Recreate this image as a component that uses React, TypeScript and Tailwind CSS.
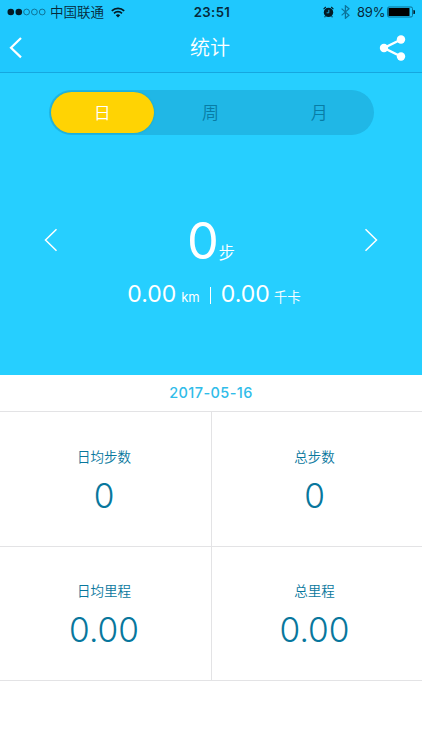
import React from "react";

function StatusBar() {
  return (
    <div className="flex h-6 items-center text-[13px] leading-6 text-[#06293a]">
      <div className="flex w-[140px] items-center pl-[7px]">
        <svg width="39" height="8" viewBox="0 0 39 8" className="shrink-0">
          <circle cx="3.8" cy="4" r="3.3" fill="#031a25" />
          <circle cx="11.8" cy="4" r="3.3" fill="#031a25" />
          {[19.6, 27.4, 35.2].map((cx) => (
            <circle key={cx} cx={cx} cy="4" r="2.9" fill="none" stroke="#0b5f80" strokeWidth="0.8" />
          ))}
        </svg>
        <span className="ml-1 w-[55px] shrink-0 whitespace-nowrap text-[13.5px] font-[350]">中国联通</span>
        <svg width="14" height="11" viewBox="0 0 14 11" className="ml-[6px] shrink-0" fill="none" stroke="#031a25" strokeWidth="1.7">
          <path d="M0.8 3.8a9 9 0 0 1 12.4 0" />
          <path d="M3 6.3a5.8 5.8 0 0 1 8 0" />
          <path d="M7 10.6 4.8 8.3a3.2 3.2 0 0 1 4.4 0z" fill="#031a25" stroke="none" />
        </svg>
      </div>
      <div className="w-[144px] text-center text-[13.2px] font-semibold tracking-[0.4px]">23:51</div>
      <div className="flex flex-1 items-center pl-[39px]">
        <svg width="11" height="12" viewBox="0 0 11 12" className="shrink-0">
          <circle cx="5.5" cy="6.4" r="4.7" fill="#031a25" />
          <path d="M0.6 3.2 2.8 1M10.4 3.2 8.2 1M2.4 10.2 1.6 11.3M8.6 10.2l.8 1.1" stroke="#031a25" strokeWidth="1.1" />
          <path d="M5.8 3.8v3H3.6" fill="none" stroke="#1fc8fe" strokeWidth="0.8" />
        </svg>
        <svg width="9" height="14" viewBox="0 0 9 14" className="ml-[7px] shrink-0" fill="none" stroke="#0b7299" strokeWidth="1.2">
          <path d="M0.6 3.6 8 10.2 4.4 13.3V0.7L8 3.8 0.6 10.4" />
        </svg>
        <span className="ml-[7px] w-[28px] shrink-0 text-[13px] tracking-[-0.2px]">89%</span>
        <svg width="28" height="12" viewBox="0 0 28 12" className="ml-[2px] shrink-0">
          <rect x="0.5" y="1" width="25" height="10" rx="1.5" fill="none" stroke="#087095" />
          <rect x="1.5" y="2" width="21" height="8" rx="0.5" fill="#000" />
          <path d="M26.4 4a2 2 0 0 1 0 4z" fill="#031a25" />
        </svg>
      </div>
    </div>
  );
}

function Header() {
  return (
    <header className="h-[73px] border-b border-[#16a7df] bg-[#1fc8fe]">
      <StatusBar />
      <div className="flex h-12 items-center justify-between pl-[8px] pr-[16px]">
        <svg width="33" height="22" viewBox="0 0 33 22" fill="none" stroke="#fff" strokeWidth="2.2">
          <path d="M13 1 3 10.7 13 20.4" />
        </svg>
        <h1 className="text-[20px] leading-6 font-[350] text-white">统计</h1>
        <svg width="27" height="26" viewBox="0 0 27 26" fill="#fff">
          <path d="M22 4.5 5 13l17 8.5" fill="none" stroke="#fff" strokeWidth="2.5" />
          <circle cx="5" cy="13" r="4.2" />
          <circle cx="22" cy="4.5" r="4.2" />
          <circle cx="22" cy="21.5" r="4.2" />
        </svg>
      </div>
    </header>
  );
}

function Tabs() {
  return (
    <div className="mx-auto flex h-[45px] w-[325px] rounded-full bg-[#20b7e6] p-[2px] text-[17px] leading-[43px] font-[350] text-[#087ca5]">
      <div className="h-[41px] w-[104px] rounded-full bg-[#ffd303] text-center text-white shadow-[0_0_2px_#16a1b8]">日</div>
      <div className="w-[113px] text-center">周</div>
      <div className="w-[105px] text-center">月</div>
    </div>
  );
}

function Arrow({ d }: { d: string }) {
  return (
    <svg width="14" height="24" viewBox="0 0 14 24" fill="none" stroke="#fff" strokeWidth="1.5">
      <path d={d} />
    </svg>
  );
}

function Summary() {
  return (
    <section className="h-[302px] bg-[#26cfff] pt-[17px] text-white">
      <Tabs />
      <div className="mt-[73px] flex h-16 items-center justify-between px-[44px]">
        <Arrow d="M12.5 1.2 1.5 12l11 10.8" />
        <div className="flex items-baseline whitespace-nowrap pt-[13px] leading-[64px]">
          <span className="text-[50.5px] font-[370] tracking-[-0.5px]">0</span>
          <span className="text-[16.5px] font-[350]">步</span>
        </div>
        <Arrow d="M1.5 1.2 12.5 12l-11 10.8" />
      </div>
      <div className="mt-[5px] flex h-9 items-center justify-center pl-[6px] leading-9">
        <div className="flex items-baseline">
          <span className="text-[23px] font-[370]">0.00</span>
          <span className="ml-[5px] text-[13px] font-normal">km</span>
        </div>
        <span className="mx-[10px] h-[17px] w-px bg-white" />
        <div className="flex items-baseline">
          <span className="text-[23px] font-[370]">0.00</span>
          <span className="ml-[4px] text-[13.5px] font-[350]">千卡</span>
        </div>
      </div>
    </section>
  );
}

function Stat({ label, value, className }: { label: string; value: string; className: string }) {
  return (
    <div className={"flex flex-col items-center border-[#e3e3e5] text-[#08779d] " + className}>
      <div className="text-[13.5px] leading-5 font-[350]">{label}</div>
      <div className="mt-[9px] text-[33.5px] leading-10 font-[360]">{value}</div>
    </div>
  );
}

export default function App() {
  return (
    <main className="h-[750px] w-[422px] overflow-hidden bg-white font-['Inter','Noto_Sans_CJK_SC',sans-serif]">
      <Header />
      <Summary />
      <div className="h-[37px] border-b border-[#e3e3e5] text-center text-[14.5px] leading-[36px] font-medium tracking-[0.4px] text-[#30bce9]">
        2017-05-16
      </div>
      <div className="grid grid-cols-[212px_210px]">
        <Stat label="日均步数" value="0" className="h-[135px] border-r border-b pt-[35px] pr-[3px]" />
        <Stat label="总步数" value="0" className="h-[135px] border-b pt-[35px] pr-[5px]" />
        <Stat label="日均里程" value="0.00" className="h-[134px] border-r border-b pt-[34px] pr-[3px]" />
        <Stat label="总里程" value="0.00" className="h-[134px] border-b pt-[34px] pr-[5px]" />
      </div>
    </main>
  );
}
